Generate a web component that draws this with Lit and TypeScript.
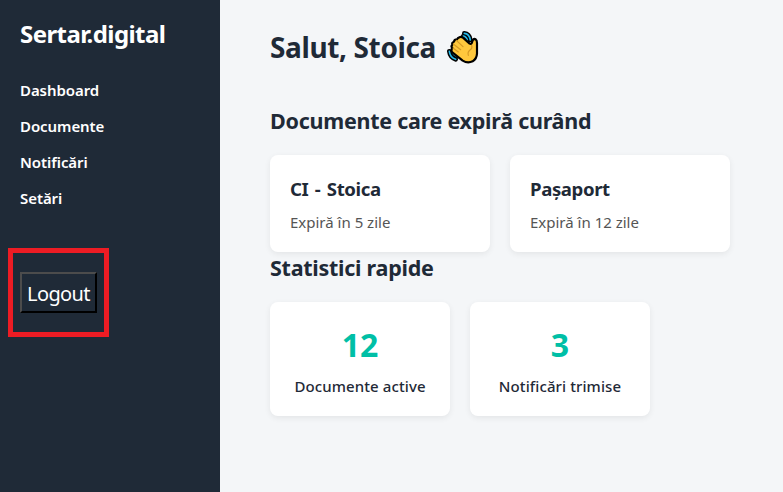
import { LitElement, html, css } from "lit";
import { customElement, property } from "lit/decorators.js";

@customElement("wave-icon")
export class WaveIcon extends LitElement {
  static styles = css`
    :host { display: block; width: 33px; height: 33px; flex: none; }
    svg { display: block; }
  `;
  render() {
    return html`<svg width="33" height="33" viewBox="0 0 99 99" fill="none" stroke-linecap="round" stroke-linejoin="round">
      <g stroke="#000" stroke-width="14">
        <path d="M52 7Q67 8 70 27M49 15Q58 17 61 27" />
        <path d="M7 61Q9 79 26 85M16 62Q19 72 29 76" />
      </g>
      <g stroke="#26b9e8" stroke-width="5">
        <path d="M52 7Q67 8 70 27M49 15Q58 17 61 27" />
        <path d="M7 61Q9 79 26 85M16 62Q19 72 29 76" />
      </g>
      <path d="M37 19Q42 16 48 20L68 38Q73 41 75 34L77 28Q80 22 86 25Q90 28 90 36L90 68Q89 84 77 91Q62 98 47 89L17 65Q10 58 16 51Q11 46 16 41Q14 34 21 32Q22 25 30 25Q32 20 37 19Z" fill="#ffc83d" stroke="#000" stroke-width="6.5" />
      <path d="M18 51L34 63M19 39L41 56M28 28L48 47M74 43Q77 52 69 57Q61 63 64 73" stroke="#d59a25" stroke-width="3.5" />
    </svg>`;
  }
}

@customElement("document-card")
export class DocumentCard extends LitElement {
  static styles = css`
    :host { display: block; box-sizing: border-box; width: 220px; height: 97px; padding: 21px 20px 0; background: #fff; border-radius: 8px; box-shadow: 0 2px 6px rgba(0, 0, 0, 0.07); }
    .title { margin: 0 0 10px; font-size: 18.6px; line-height: 26px; font-weight: 700; letter-spacing: -0.4px; word-spacing: 2px; }
    .expiry { margin: 0; font-size: 15px; line-height: 20px; color: #555; }
  `;
  @property() name = "";
  @property({ type: Number }) days = 0;
  render() {
    return html`<h3 class="title">${this.name}</h3><p class="expiry">Expiră în ${this.days} zile</p>`;
  }
}

@customElement("stat-card")
export class StatCard extends LitElement {
  static styles = css`
    :host { display: block; box-sizing: border-box; width: 180px; height: 114px; padding-top: 22px; background: #fff; border-radius: 8px; box-shadow: 0 2px 6px rgba(0, 0, 0, 0.07); text-align: center; }
    .value { margin-bottom: 10px; font-size: 32px; line-height: 42px; font-weight: 700; color: #00bfa6; }
    .label { font-size: 15px; line-height: 20px; font-weight: 500; letter-spacing: 0.1px; }
  `;
  @property({ type: Number }) value = 0;
  @property() label = "";
  render() {
    return html`<div class="value">${this.value}</div><div class="label">${this.label}</div>`;
  }
}

@customElement("app-root")
export class AppRoot extends LitElement {
  static styles = css`
    :host { display: flex; height: 100vh; overflow: hidden; background: #f4f6f8; color: #1f2937; font-family: "Noto Sans", "Open Sans", sans-serif; }
    .sidebar { box-sizing: border-box; flex: none; width: 220px; padding: 18px 20px 0; background: #1f2a37; color: #fff; }
    .brand { margin: 0 0 30px; font-size: 24px; line-height: 32px; font-weight: 700; letter-spacing: -0.57px; }
    .nav { display: flex; flex-direction: column; gap: 16px; }
    .link { color: #fff; text-decoration: none; font-size: 15px; line-height: 20px; font-weight: 600; letter-spacing: -0.07px; }
    .highlight { box-sizing: border-box; display: flex; width: 101px; height: 89px; margin: 40px 0 0 -12px; padding: 19px 7px; border: 5px solid #ed1c24; align-items: flex-start; }
    .logout { box-sizing: border-box; width: 77px; height: 41px; padding: 2px 0 0; border: 2px outset #000; border-color: #4c4c4c #000 #000 #4c4c4c; background: transparent; color: #fff; font: 400 20px/36px "Noto Sans", "Open Sans", sans-serif; letter-spacing: -0.6px; }
    .main { flex: 1; padding: 28px 50px 0; color: #1f2a37; }
    .greeting { display: flex; margin: 0 0 40px; font-size: 28px; line-height: 38px; font-weight: 700; letter-spacing: -0.37px; }
    .wave { margin: 3px 0 0 11px; }
    .heading { margin: 0 0 19px; font-size: 21.5px; line-height: 30px; font-weight: 700; letter-spacing: -0.26px; }
    .cards { display: flex; gap: 20px; }
    .cards + .heading { margin-top: 1px; }
  `;
  private links = ["Dashboard", "Documente", "Notificări", "Setări"];
  private documents = [{ name: "CI - Stoica", days: 5 }, { name: "Pașaport", days: 12 }];
  private stats = [{ value: 12, label: "Documente active" }, { value: 3, label: "Notificări trimise" }];
  render() {
    return html`
      <aside class="sidebar">
        <h2 class="brand">Sertar.digital</h2>
        <nav class="nav">${this.links.map((l) => html`<a class="link" href="#">${l}</a>`)}</nav>
        <div class="highlight"><button class="logout">Logout</button></div>
      </aside>
      <main class="main">
        <h1 class="greeting">Salut, Stoica<wave-icon class="wave"></wave-icon></h1>
        <h2 class="heading">Documente care expiră curând</h2>
        <section class="cards">${this.documents.map((d) => html`<document-card .name=${d.name} .days=${d.days}></document-card>`)}</section>
        <h2 class="heading">Statistici rapide</h2>
        <section class="cards">${this.stats.map((s) => html`<stat-card .value=${s.value} .label=${s.label}></stat-card>`)}</section>
      </main>`;
  }
}
